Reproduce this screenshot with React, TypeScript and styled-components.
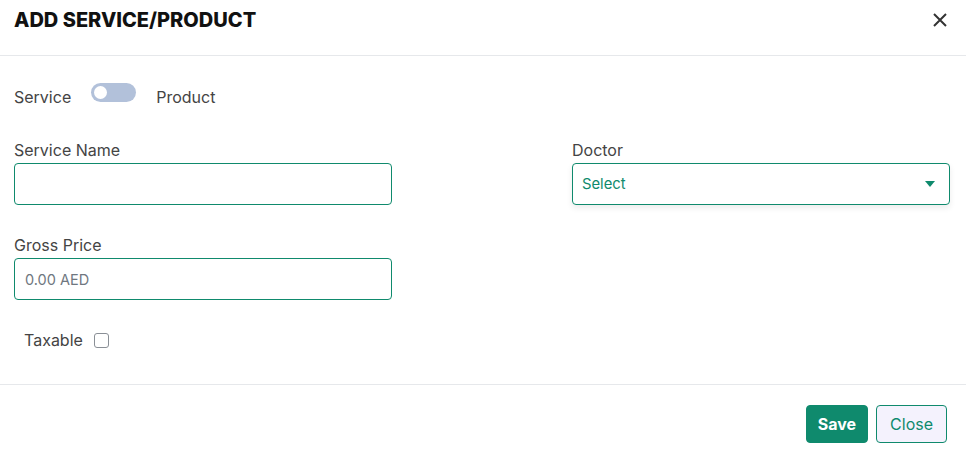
import * as React from 'react';
import styled, {createGlobalStyle} from 'styled-components';

const green = '#0f8a6d';

const GlobalStyle = createGlobalStyle`
  body {
    margin: 0;
    background: #fff;
    font-family: Inter, 'Noto Sans', sans-serif;
  }
`;

const Modal = styled.div`
  width: 966px;
  height: 453px;
  display: flex;
  flex-direction: column;
  background: #fff;
`;

const Header = styled.div`
  height: 56px;
  box-sizing: border-box;
  border-bottom: 1px solid #e6e8eb;
  display: flex;
  align-items: center;
  justify-content: space-between;
  padding: 0 18px 15px 14px;
`;

const Title = styled.h2`
  margin: 0;
  font-size: 20px;
  font-weight: 800;
  color: #111;
`;

const CloseIcon = styled.button`
  border: 0;
  background: none;
  padding: 0;
  display: flex;
  color: #333;
  cursor: pointer;
`;

const Body = styled.div`
  flex: 1;
  padding: 27px 16px 0 14px;
  border-bottom: 1px solid #e6e8eb;
`;

const ToggleRow = styled.div`
  display: flex;
  align-items: center;
  gap: 20px;
  font-size: 16px;
  color: #444;
  height: 27px;
  margin-bottom: 30px;
`;

const Track = styled.span<{on?: boolean}>`
  width: 45px;
  height: 19px;
  border-radius: 10px;
  background: ${({on}) => (on ? green : '#b2c1da')};
  position: relative;
  margin-top: -8px;
  &::after {
    content: '';
    position: absolute;
    top: 3px;
    left: ${({on}) => (on ? '29px' : '3px')};
    width: 13px;
    height: 13px;
    border-radius: 50%;
    background: #fff;
  }
`;

const Grid = styled.div`
  display: grid;
  grid-template-columns: 378px 378px;
  column-gap: 180px;
  row-gap: 30px;
`;

const Field = styled.div`
  display: flex;
  flex-direction: column;
  gap: 3px;
`;

const Label = styled.label`
  font-size: 16px;
  color: #444;
  line-height: 20px;
`;

const Input = styled.input`
  box-sizing: border-box;
  height: 42px;
  width: 100%;
  border: 1px solid ${green};
  border-radius: 4px;
  padding: 0 10px;
  font-family: inherit;
  font-size: 14.5px;
  color: #333;
  outline: none;
  &::placeholder {
    color: #6f7780;
  }
`;

const Select = styled.div`
  box-sizing: border-box;
  height: 42px;
  border: 1px solid ${green};
  border-radius: 4px;
  padding: 0 14px 0 9px;
  display: flex;
  align-items: center;
  justify-content: space-between;
  font-size: 14.8px;
  color: ${green};
  box-shadow: 0 3px 6px rgba(0, 0, 0, 0.08);
`;

const Caret = styled.span`
  width: 0;
  height: 0;
  border-left: 5px solid transparent;
  border-right: 5px solid transparent;
  border-top: 6px solid ${green};
`;

const TaxRow = styled.label`
  display: flex;
  align-items: center;
  gap: 11px;
  margin: 30px 0 0 10px;
  font-size: 16px;
  color: #444;
`;

const Check = styled.span`
  width: 15px;
  height: 15px;
  box-sizing: border-box;
  border: 1px solid #8a8f96;
  border-radius: 3px;
`;

const Footer = styled.div`
  height: 68px;
  display: flex;
  justify-content: flex-end;
  align-items: flex-start;
  gap: 8px;
  padding: 20px 19px 0 0;
  box-sizing: border-box;
`;

const Button = styled.button<{primary?: boolean}>`
  height: 38px;
  padding: 0 ${({primary}) => (primary ? '11px' : '13px')};
  border-radius: 4px;
  font-family: inherit;
  font-size: 16px;
  font-weight: ${({primary}) => (primary ? 700 : 400)};
  color: ${({primary}) => (primary ? '#fff' : green)};
  background: ${({primary}) => (primary ? green : '#f4f2fd')};
  border: 1px solid ${green};
  cursor: pointer;
`;

export default function App() {
  return (
    <>
      <GlobalStyle />
      <Modal>
        <Header>
          <Title>ADD SERVICE/PRODUCT</Title>
          <CloseIcon aria-label="Close">
            <svg width="16" height="16" viewBox="0 0 16 16">
              <path d="M2 2 L14 14 M14 2 L2 14" stroke="currentColor" strokeWidth="2" />
            </svg>
          </CloseIcon>
        </Header>
        <Body>
          <ToggleRow>
            <span>Service</span>
            <Track />
            <span>Product</span>
          </ToggleRow>
          <Grid>
            <Field>
              <Label>Service Name</Label>
              <Input />
            </Field>
            <Field>
              <Label>Doctor</Label>
              <Select>
                <span>Select</span>
                <Caret />
              </Select>
            </Field>
            <Field>
              <Label>Gross Price</Label>
              <Input placeholder="0.00 AED" />
            </Field>
          </Grid>
          <TaxRow>
            Taxable
            <Check />
          </TaxRow>
        </Body>
        <Footer>
          <Button primary>Save</Button>
          <Button>Close</Button>
        </Footer>
      </Modal>
    </>
  );
}
